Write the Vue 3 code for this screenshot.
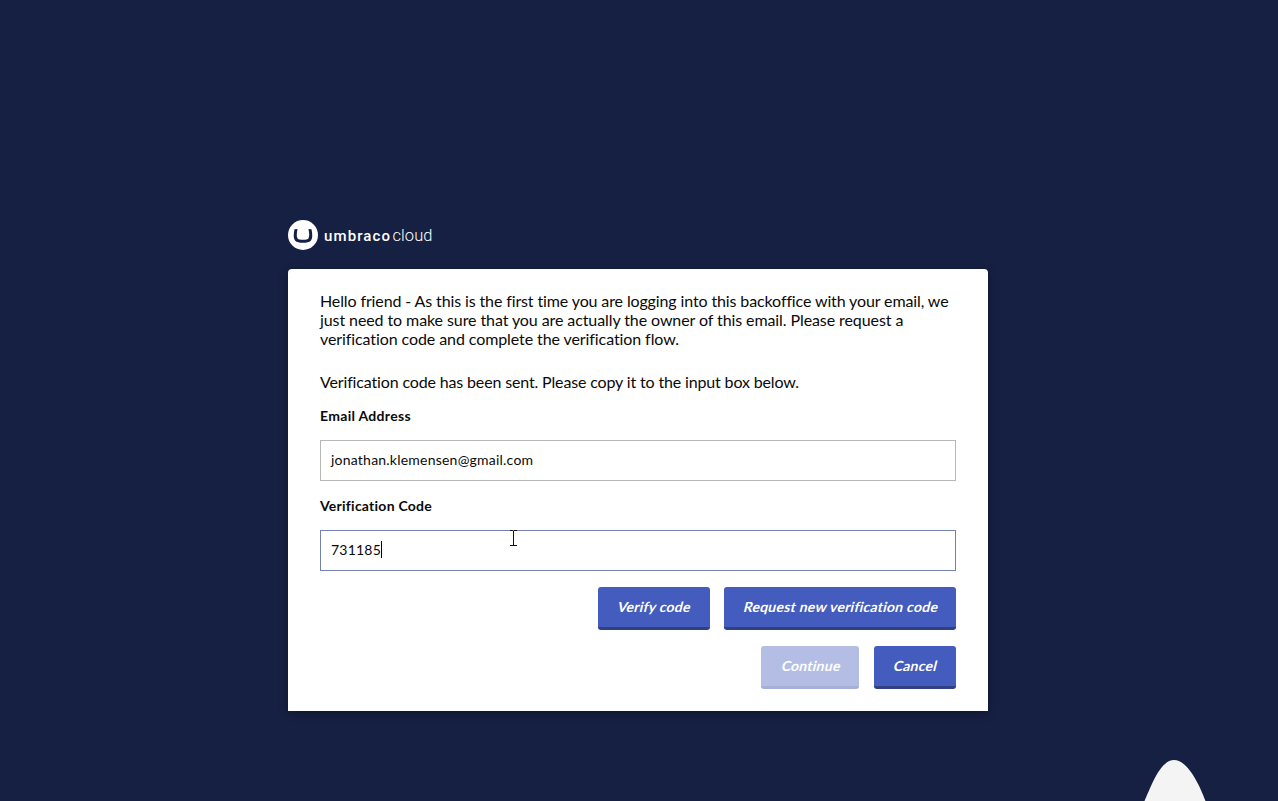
<script setup>
import { ref } from 'vue'

const email = ref('jonathan.klemensen@gmail.com')
const code = ref('731185')
</script>

<template>
  <div class="page">
    <main class="login">
      <svg class="logo" width="160" height="30" viewBox="0 0 160 30" aria-label="umbraco cloud">
        <circle cx="15" cy="15" r="15" fill="#fff" />
        <path
          d="M6.500 9.300 C5.400 14.500 5.300 18.600 7.200 20.800 C8.700 22.400 11.500 22.800 15 22.800 C18.500 22.800 21.300 22.400 22.800 20.800 C24.700 18.600 24.600 14.500 23.500 9.300 L20.500 9 C21.500 14 21.500 17 20.400 18.400 C19.500 19.500 17.600 19.700 15 19.700 C12.400 19.700 10.500 19.500 9.600 18.400 C8.500 17 8.500 14 9.500 9 Z"
          fill="#162042"
        />
        <text class="brand" x="36" y="21" textLength="66">umbraco</text>
        <text class="product" x="104.5" y="21" textLength="40">cloud</text>
      </svg>
      <form class="card" @submit.prevent>
        <p class="intro">
          Hello friend - As this is the first time you are logging into this backoffice with your email, we<br />
          <span class="loose">just need to make sure that you are actually the owner of this email. Please request a<br />
          verification code and complete the verification flow.</span>
        </p>
        <p class="status">Verification code has been sent. Please copy it to the input box below.</p>
        <label class="label">Email Address</label>
        <div class="field">{{ email }}</div>
        <label class="label second">Verification Code</label>
        <div class="field focused">
          <span>{{ code }}</span><i class="caret"></i>
          <svg class="pointer" width="9" height="17" viewBox="0 0 9 17">
            <path d="M1 .5h3M5 .5h3M4.500 1v15M1 15.500h3M5 15.500h3" fill="none" stroke="#111" />
          </svg>
        </div>
        <div class="actions verify">
          <button class="btn w-verify"><span>Verify code</span></button>
          <button class="btn w-request"><span>Request new verification code</span></button>
        </div>
        <div class="actions finish">
          <button class="btn w-continue" disabled><span>Continue</span></button>
          <button class="btn w-cancel"><span>Cancel</span></button>
        </div>
      </form>
    </main>
    <svg class="blob" width="64" height="42" viewBox="0 0 64 42">
      <path d="M1.500 42 C8 28 17 1 31 1 C44 1 56 24 62.500 42 Z" fill="#f4f4f4" />
    </svg>
  </div>
</template>

<style>
body {
  margin: 0;
  background: #162042;
}
</style>

<style scoped>
.page {
  position: relative;
  box-sizing: border-box;
  width: 100%;
  height: 801px;
  padding: 220px 0 0 288px;
  overflow: hidden;
  background: #162042;
  font-family: Lato, "Liberation Sans", sans-serif;
  color: #0a0a0a;
}
.login {
  width: 700px;
}
.logo {
  display: block;
  margin-bottom: 19px;
}
.brand,
.product {
  fill: #fff;
  font-family: Roboto, sans-serif;
}
.brand {
  font-size: 15px;
  font-weight: 500;
}
.product {
  font-size: 16.5px;
  font-weight: 300;
}
.card {
  box-sizing: border-box;
  height: 442px;
  padding: 22px 32px 0;
  border-radius: 4px 4px 0 0;
  background: #fff;
  box-shadow: 0 2px 8px rgba(0, 0, 0, 0.35);
}
.intro,
.status {
  margin: 0;
  font-size: 16px;
  line-height: 19px;
  letter-spacing: -0.12px;
  white-space: nowrap;
}
.loose {
  letter-spacing: -0.09px;
}
.status {
  margin-top: 24px;
  letter-spacing: -0.15px;
}
.label {
  display: block;
  margin-top: 16px;
  font-size: 14px;
  font-weight: 700;
  line-height: 18px;
  letter-spacing: 0.3px;
}
.second {
  letter-spacing: 0.24px;
}
.field {
  position: relative;
  box-sizing: border-box;
  display: flex;
  align-items: center;
  height: 41px;
  margin-top: 15px;
  padding: 0 10px 2px;
  border: 1px solid #b8b8b8;
  font-size: 14px;
  letter-spacing: 0.22px;
}
.focused {
  border-color: #7381b0;
}
.caret {
  width: 1px;
  height: 17px;
  background: #000;
}
.pointer {
  position: absolute;
  left: 188px;
  top: -1px;
}
.actions {
  display: flex;
  justify-content: flex-end;
}
.verify {
  gap: 14px;
  margin-top: 16px;
}
.finish {
  gap: 15px;
  margin-top: 16px;
}
.btn {
  box-sizing: border-box;
  height: 43px;
  padding: 0 0 1px 2px;
  border: 0;
  border-bottom: 3px solid #304080;
  border-radius: 3px;
  background: #445cbd;
  color: #fff;
  font: 700 14px Lato, sans-serif;
  letter-spacing: 0.25px;
}
.btn span {
  display: inline-block;
  transform: skewX(-14deg);
}
.btn:disabled {
  border-bottom-color: #a5afd9;
  background: #b4bee4;
}
.w-verify {
  width: 112px;
}
.w-request {
  width: 232px;
}
.w-continue {
  width: 98px;
}
.w-cancel {
  width: 82px;
}
.blob {
  position: absolute;
  left: 1143px;
  bottom: 0;
}
</style>
